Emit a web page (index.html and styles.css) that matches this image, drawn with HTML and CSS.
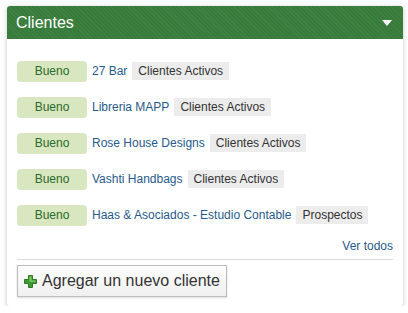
FILE: index.html
```html
<!DOCTYPE html>
<html lang="es">
<head>
    <meta charset="UTF-8">
    <meta name="viewport" content="width=device-width, initial-scale=1.0">
    <title>Clientes</title>
    <link rel="stylesheet" href="styles.css">
</head>
<body>

    <div class="panel">
        <div class="panel-header">
            <span class="panel-title">Clientes</span>
            <span class="caret"></span>
        </div>

        <div class="panel-body">
            <ul class="client-list">
                <li class="client-row">
                    <span class="status">Bueno</span>
                    <a href="#" class="client-name">27 Bar</a>
                    <span class="tag">Clientes Activos</span>
                </li>
                <li class="client-row">
                    <span class="status">Bueno</span>
                    <a href="#" class="client-name">Libreria MAPP</a>
                    <span class="tag">Clientes Activos</span>
                </li>
                <li class="client-row">
                    <span class="status">Bueno</span>
                    <a href="#" class="client-name">Rose House Designs</a>
                    <span class="tag">Clientes Activos</span>
                </li>
                <li class="client-row">
                    <span class="status">Bueno</span>
                    <a href="#" class="client-name">Vashti Handbags</a>
                    <span class="tag">Clientes Activos</span>
                </li>
                <li class="client-row">
                    <span class="status">Bueno</span>
                    <a href="#" class="client-name">Haas &amp; Asociados - Estudio Contable</a>
                    <span class="tag">Prospectos</span>
                </li>
            </ul>

            <div class="see-all">
                <a href="#">Ver todos</a>
            </div>

            <div class="panel-footer">
                <button class="add-button">
                    <svg class="plus-icon" width="13" height="13" viewBox="0 0 13 13">
                        <path d="M4.5 0.5h4v4h4v4h-4v4h-4v-4h-4v-4h4z" fill="#3f9a34" stroke="#2b7a25" stroke-width="1" stroke-linejoin="round"/>
                        <path d="M5.5 1.5h2v4h4v1.2h-6z" fill="#7fcb62"/>
                    </svg>
                    Agregar un nuevo cliente
                </button>
            </div>
        </div>
    </div>

</body>
</html>
```

FILE: styles.css
```css
body {
    margin: 0;
    padding: 6px 5px 0 7px;
    background: #fff;
    font-family: "Liberation Sans", Arial, sans-serif;
    font-size: 12px;
    color: #333;
}
.panel {
    width: 396px;
    background: #fff;
    border-radius: 3px;
    box-shadow: 0 1px 5px rgba(0, 0, 0, 0.22);
}
.panel-header {
    display: flex;
    align-items: center;
    justify-content: space-between;
    height: 33px;
    padding: 0 11px 0 9px;
    border-radius: 3px 3px 0 0;
    background-color: #387c3c;
    background-image: repeating-linear-gradient(45deg, rgba(255, 255, 255, 0.04) 0 1px, transparent 1px 3px);
}
.panel-title {
    color: #fff;
    font-size: 16px;
}
.caret {
    width: 0;
    height: 0;
    border-left: 5px solid transparent;
    border-right: 5px solid transparent;
    border-top: 6px solid #fff;
    margin-top: 1px;
}
.panel-body {
    padding: 14px 10px 9px 10px;
}
.client-list {
    list-style: none;
    margin: 0;
    padding: 0;
}
.client-row {
    display: flex;
    align-items: center;
    height: 36px;
}
.status {
    width: 70px;
    height: 21px;
    line-height: 21px;
    text-align: center;
    background: #d8e7bf;
    color: #2d6a2d;
    border-radius: 4px;
    margin-right: 5px;
}
.client-name {
    color: #275a8a;
    text-decoration: none;
    margin-right: 5px;
}
.tag {
    height: 18px;
    line-height: 18px;
    padding: 0 6px;
    background: #ececec;
    color: #333;
}
.see-all {
    text-align: right;
    line-height: 16px;
    margin-top: 5px;
    padding-bottom: 5px;
    border-bottom: 1px solid #dcdcdc;
}
.see-all a {
    color: #275a8a;
    text-decoration: none;
}
.panel-footer {
    padding-top: 5px;
}
.add-button {
    display: flex;
    align-items: center;
    gap: 5px;
    height: 32px;
    padding: 0 6px 0 6px;
    font-family: "Liberation Sans", Arial, sans-serif;
    font-size: 16px;
    color: #333;
    background: linear-gradient(#fdfdfd, #f0f0f0);
    border: 1px solid #bdbdbd;
    border-radius: 0;
    box-shadow: 0 1px 2px rgba(0, 0, 0, 0.15);
    cursor: pointer;
}
.plus-icon {
    display: block;
}
```
